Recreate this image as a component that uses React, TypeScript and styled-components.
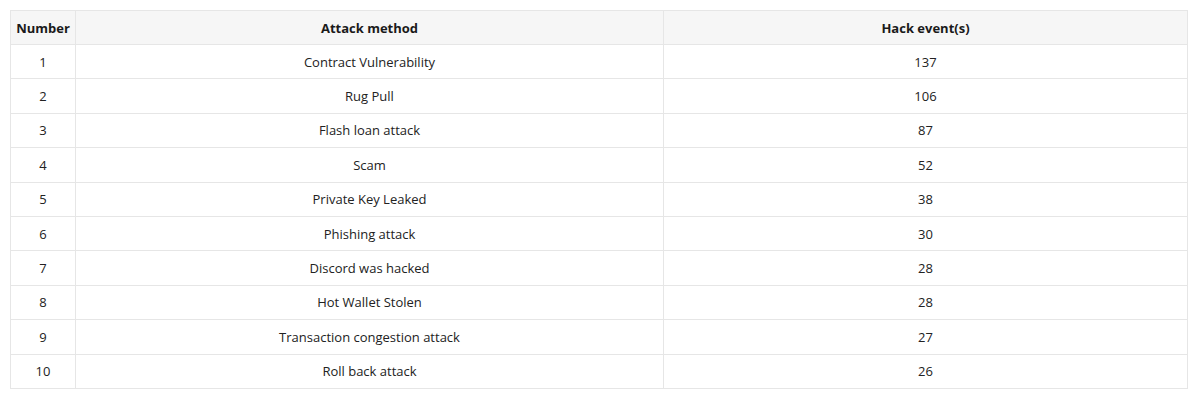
import React from "react";
import styled, { createGlobalStyle } from "styled-components";

const Global = createGlobalStyle`
  html, body { margin: 0; padding: 0; background: #fff; }
  body { font-family: "Open Sans", "Noto Sans", sans-serif; color: #222; }
`;

const Wrap = styled.div`
  padding: 10px 12px 10px 10px;
`;

const Table = styled.table`
  width: 1178px;
  border-collapse: collapse;
  table-layout: fixed;
  font-size: 13px;
`;

const Th = styled.th<{ $w?: number }>`
  ${(p) => (p.$w ? `width: ${p.$w}px;` : "")}
  background: #f6f6f6;
  font-weight: 700;
  height: 33px;
  padding: 0;
  border: 1px solid #e6e6e6;
  text-align: center;
  color: #1a1a1a;
`;

const Td = styled.td`
  height: 33.4px;
  padding: 0;
  border: 1px solid #e6e6e6;
  text-align: center;
  color: #222;
`;

const rows: [number, string, number][] = [
  [1, "Contract Vulnerability", 137],
  [2, "Rug Pull", 106],
  [3, "Flash loan attack", 87],
  [4, "Scam", 52],
  [5, "Private Key Leaked", 38],
  [6, "Phishing attack", 30],
  [7, "Discord was hacked", 28],
  [8, "Hot Wallet Stolen", 28],
  [9, "Transaction congestion attack", 27],
  [10, "Roll back attack", 26],
];

export default function App() {
  return (
    <>
      <Global />
      <Wrap>
        <Table>
          <thead>
            <tr>
              <Th $w={64}>Number</Th>
              <Th $w={587}>Attack method</Th>
              <Th>Hack event(s)</Th>
            </tr>
          </thead>
          <tbody>
            {rows.map(([n, m, c]) => (
              <tr key={n}>
                <Td>{n}</Td>
                <Td>{m}</Td>
                <Td>{c}</Td>
              </tr>
            ))}
          </tbody>
        </Table>
      </Wrap>
    </>
  );
}
